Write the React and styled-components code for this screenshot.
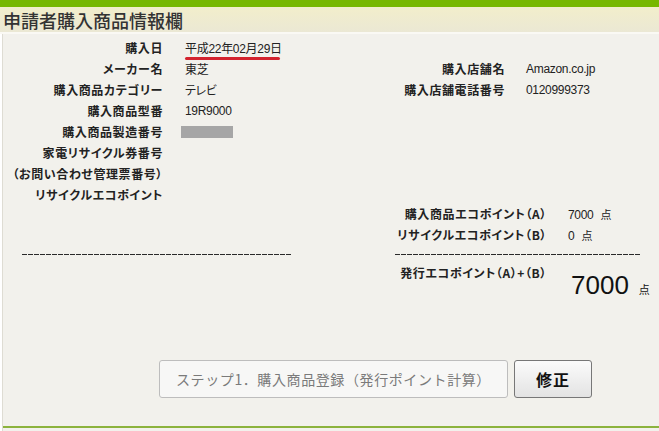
import React from "react";
import styled, { createGlobalStyle } from "styled-components";

const GlobalStyle = createGlobalStyle`
  html, body {
    margin: 0;
    padding: 0;
    background: #ffffff;
  }
  body {
    font-family: "Liberation Sans", "Noto Sans CJK JP", sans-serif;
    color: #222;
  }
`;

const Page = styled.div`
  width: 659px;
  height: 431px;
  overflow: hidden;
  display: flex;
  flex-direction: column;
`;

const TopBar = styled.div`
  height: 7px;
  background: #77b800;
`;

const Header = styled.h1`
  margin: 0;
  height: 25px;
  padding-left: 3px;
  display: flex;
  align-items: center;
  background: linear-gradient(#f2eecb, #ebe8d4);
  font-family: "Noto Sans CJK JP", sans-serif;
  font-size: 18px;
  font-weight: 500;
  color: #333;
  border-bottom: 2px solid #faf9f4;
`;

const Body = styled.div`
  flex: 1;
  margin-left: 2px;
  border-left: 1px solid #dedcd3;
  background: #f2f1ec;
  display: flex;
  flex-direction: column;
`;

const InfoSection = styled.div`
  display: grid;
  grid-template-columns: 330px 1fr;
  padding-top: 3px;
`;

const Table = styled.div`
  display: grid;
  grid-template-columns: ${({ $label }) => $label}px 1fr;
  column-gap: ${({ $gap }) => $gap || 21}px;
  grid-auto-rows: 21px;
  align-items: center;
  margin-top: ${({ $top }) => $top || 0}px;
`;

const Label = styled.div`
  text-align: right;
  font-family: "Noto Sans CJK JP", sans-serif;
  font-feature-settings: "palt";
  font-size: 12px;
  font-weight: 700;
  letter-spacing: 0.6px;
  color: #222;
  white-space: nowrap;
`;

const Value = styled.div`
  font-size: 12px;
  font-feature-settings: "palt";
  color: #222;
  white-space: nowrap;
  letter-spacing: -0.3px;
`;

const Marked = styled.span`
  position: relative;
  &::after {
    content: "";
    position: absolute;
    left: 0;
    right: 2px;
    bottom: -4px;
    height: 3px;
    border-radius: 2px;
    background: #d3232e;
  }
`;

const Masked = styled.div`
  width: 52px;
  height: 12px;
  margin-left: -4px;
  background: #a6a6a6;
`;

const Unit = styled.span`
  font-family: "Noto Sans CJK JP", sans-serif;
  font-size: ${({ $size }) => $size || 11}px;
  margin-left: ${({ $gap }) => $gap || 7}px;
`;

const RightColumn = styled.div`
  display: flex;
  flex-direction: column;
  padding-top: 21px;
`;

const DashRow = styled.div`
  display: grid;
  grid-template-columns: 19px 269px 104px 246px;
  margin-top: 9px;
`;

const Dash = styled.div`
  grid-column: ${({ $col }) => $col};
  height: 1px;
  background: repeating-linear-gradient(to right, #2a2a2a 0 5px, transparent 5px 6px);
`;

const TotalRow = styled.div`
  display: grid;
  grid-template-columns: 544px auto;
  column-gap: 24px;
  margin-top: 7px;
`;

const TotalLabel = styled(Label)`
  line-height: 21px;
`;

const TotalValue = styled.div`
  margin-top: 8px;
  font-size: 26px;
  line-height: 30px;
  color: #111;
`;

const ButtonRow = styled.div`
  display: flex;
  gap: 6px;
  padding-left: 156px;
  margin-top: 56px;
`;

const Button = styled.button`
  height: 38px;
  padding: 0 ${({ $primary }) => ($primary ? 16 : 21)}px;
  border-radius: 3px;
  font-family: "Noto Sans CJK JP", sans-serif;
  font-size: ${({ $primary }) => ($primary ? 14 : 16)}px;
  font-weight: ${({ $primary }) => ($primary ? 400 : 700)};
  letter-spacing: ${({ $primary }) => ($primary ? 0.6 : 1)}px;
  color: ${({ disabled }) => (disabled ? "#7a7a7a" : "#111")};
  border: 1px solid ${({ disabled }) => (disabled ? "#bdbdbd" : "#777")};
  background: ${({ disabled }) =>
    disabled ? "#f7f7f6" : "linear-gradient(#fbfbfb, #e3e3e3)"};
  cursor: ${({ disabled }) => (disabled ? "default" : "pointer")};
`;

const Footer = styled.div`
  margin-top: auto;
  height: 2px;
  margin-bottom: 3px;
  background: #8cb33d;
`;

const leftRows = [
  ["購入日", <Marked>平成22年02月29日</Marked>],
  ["メーカー名", "東芝"],
  ["購入商品カテゴリー", "テレビ"],
  ["購入商品型番", "19R9000"],
  ["購入商品製造番号", <Masked />],
  ["家電リサイクル券番号", ""],
  ["（お問い合わせ管理票番号）", ""],
  ["リサイクルエコポイント", ""],
];

export default function App() {
  return (
    <Page>
      <GlobalStyle />
      <TopBar />
      <Header>申請者購入商品情報欄</Header>
      <Body>
        <InfoSection>
          <Table $label={160} $gap={22}>
            {leftRows.map(([label, value]) => (
              <React.Fragment key={label}>
                <Label>{label}</Label>
                <Value>{value}</Value>
              </React.Fragment>
            ))}
          </Table>
          <RightColumn>
            <Table $label={172}>
              <Label>購入店舗名</Label>
              <Value>Amazon.co.jp</Value>
              <Label>購入店舗電話番号</Label>
              <Value>0120999373</Value>
            </Table>
            <Table $label={214} $top={103}>
              <Label>購入商品エコポイント（A）</Label>
              <Value>
                7000<Unit>点</Unit>
              </Value>
              <Label>リサイクルエコポイント（B）</Label>
              <Value>
                0<Unit>点</Unit>
              </Value>
            </Table>
          </RightColumn>
        </InfoSection>
        <DashRow>
          <Dash $col={2} />
          <Dash $col={4} />
        </DashRow>
        <TotalRow>
          <TotalLabel>発行エコポイント（A）+（B）</TotalLabel>
          <TotalValue>
            7000<Unit $size={11} $gap={10}>点</Unit>
          </TotalValue>
        </TotalRow>
        <ButtonRow>
          <Button $primary disabled>
            ステップ1．購入商品登録（発行ポイント計算）
          </Button>
          <Button>修正</Button>
        </ButtonRow>
        <Footer />
      </Body>
    </Page>
  );
}
